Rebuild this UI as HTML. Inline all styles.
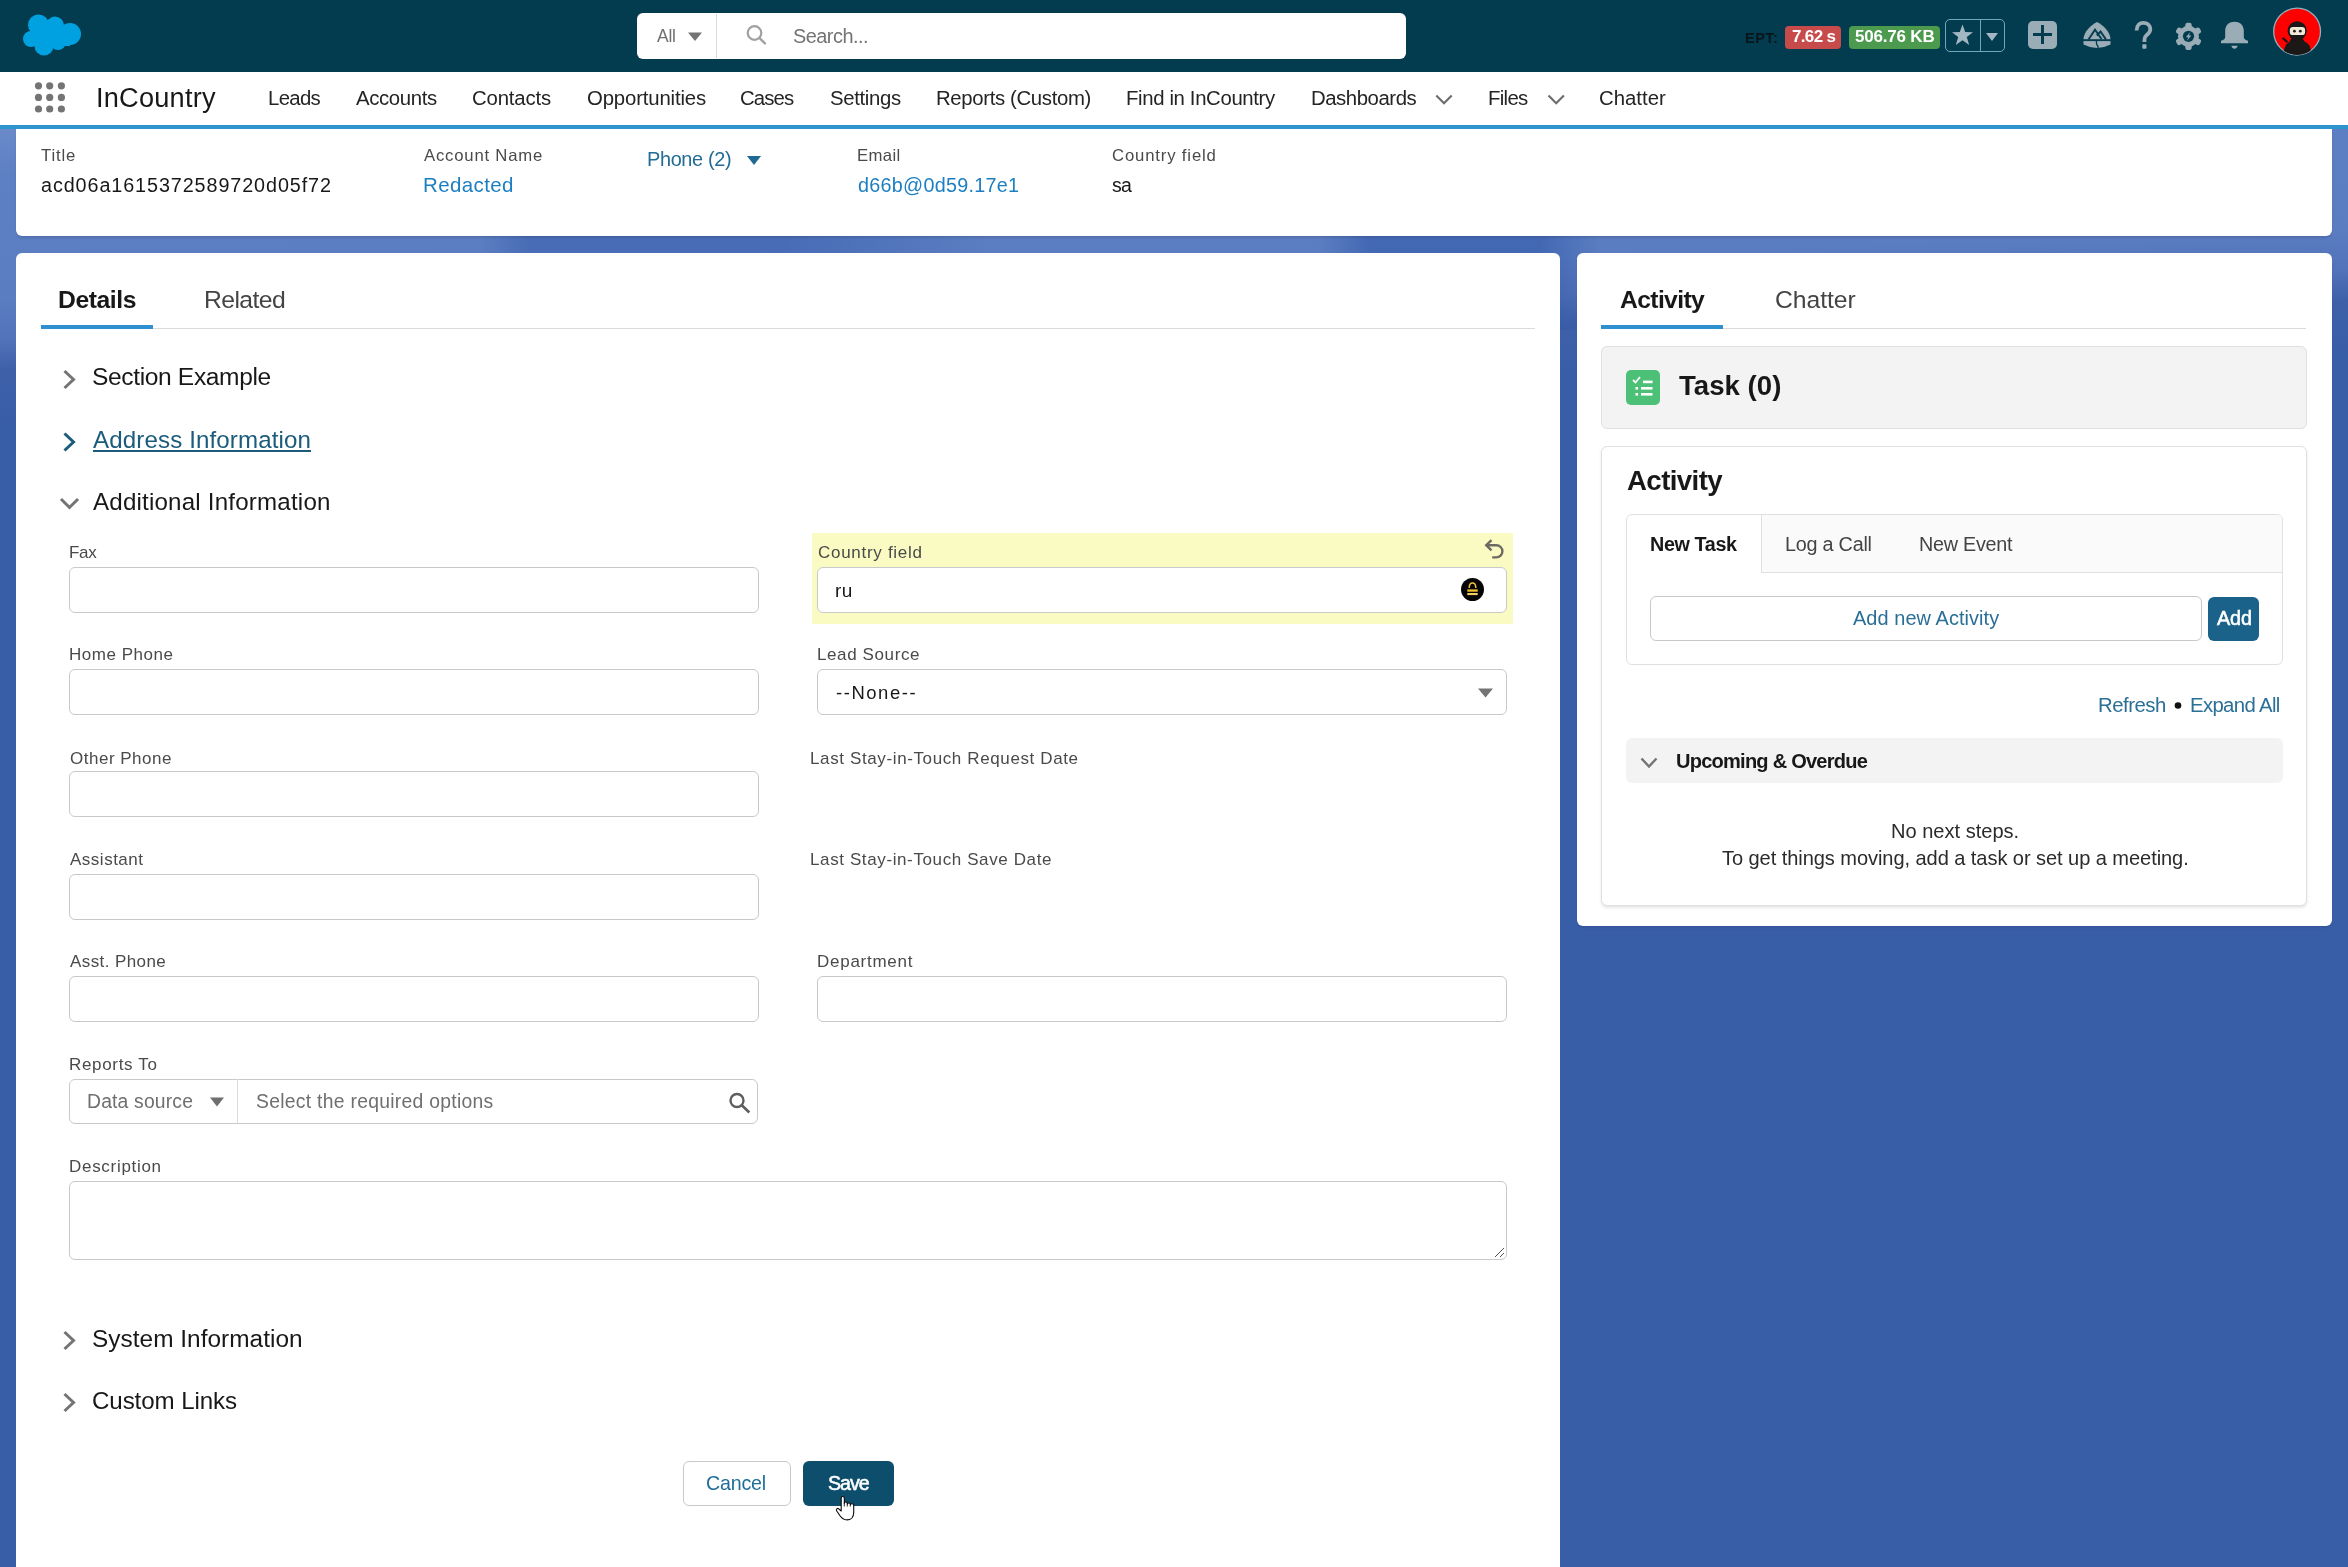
<!DOCTYPE html>
<html><head><meta charset="utf-8">
<style>
html,body{margin:0;padding:0;}
body{width:2348px;height:1567px;overflow:hidden;position:relative;font-family:"Liberation Sans",sans-serif;
 background:
  linear-gradient(178.3deg,#6a8aca 128px,#5d7fc3 175px,#5a7cc1 300px,#5272b9 340px,#3e60a9 370px,#395ea8 420px,#395ea8 1640px);}
.a{position:absolute;box-sizing:border-box;}
.t{position:absolute;white-space:nowrap;will-change:transform;}
.inp{position:absolute;box-sizing:border-box;border:1px solid #c9c9c9;border-radius:6px;background:#fff;}
svg{position:absolute;overflow:visible;}
</style></head><body>
<div class="a" style="left:0;top:200px;width:2348px;height:130px;background:linear-gradient(90deg,rgba(45,85,165,0) 0px,rgba(45,85,165,0) 480px,rgba(45,85,165,0.42) 530px,rgba(45,85,165,0.42) 780px,rgba(45,85,165,0) 990px,rgba(45,85,165,0) 1320px,rgba(45,85,165,0.5) 1370px,rgba(45,85,165,0.5) 1540px,rgba(45,85,165,0) 1600px,rgba(45,85,165,0) 2348px);"></div>
<!-- header -->
<div class="a" style="left:0;top:0;width:2348px;height:72px;background:#033c4f;"></div>
<svg style="left:0;top:0" width="100" height="72">
 <g fill="#00a1e0">
  <circle cx="38.5" cy="25" r="10.5"/>
  <circle cx="55" cy="25.5" r="9"/>
  <circle cx="70" cy="34" r="11"/>
  <circle cx="31" cy="39" r="8"/>
  <circle cx="44" cy="46" r="9.5"/>
  <circle cx="58" cy="42" r="8"/>
  <rect x="30" y="26" width="40" height="20"/>
 </g>
</svg>
<div class="a" style="left:637px;top:13px;width:769px;height:46px;background:#fff;border-radius:6px;"></div>
<div class="a" style="left:716px;top:14px;width:1px;height:44px;background:#dcdcdc;"></div>
<svg style="left:0;top:0" width="2348" height="72">
 <path d="M688 32.5 L702 32.5 L695 41 Z" fill="#747474"/>
 <circle cx="754.5" cy="33" r="6.8" fill="none" stroke="#a0a0a0" stroke-width="2.2"/>
 <path d="M759.5 38 L765 43.5" stroke="#a0a0a0" stroke-width="2.4" stroke-linecap="round"/>
</svg>
<!-- badges -->
<div class="a" style="left:1785px;top:26px;width:56px;height:23px;background:#c84b4c;border-radius:4px;"></div>
<div class="a" style="left:1849px;top:26px;width:91px;height:23px;background:#4c9a4d;border-radius:4px;"></div>
<div class="a" style="left:1945px;top:19px;width:60px;height:33px;border:1.5px solid #6fa7bd;border-radius:5px;"></div>
<div class="a" style="left:1979.5px;top:20px;width:1.5px;height:31px;background:#6fa7bd;"></div>
<svg style="left:0;top:0" width="2348" height="72">
 <path d="M1962.5 24.5 L1965.2 32 L1973 32.2 L1966.8 37 L1969.2 45 L1962.5 40.2 L1955.8 45 L1958.2 37 L1952 32.2 L1959.8 32 Z" fill="#a3b7c3"/>
 <path d="M1986 33 L1998 33 L1992 41 Z" fill="#a3b7c3"/>
 <rect x="2028" y="21" width="29" height="28" rx="5" fill="#9aacb6"/>
 <path d="M2042.5 25 V44 M2033 34.5 H2052" stroke="#033c4f" stroke-width="3"/>
 <!-- trailhead -->
 <path d="M2097 22 C2103 25 2110.3 32 2110.5 39 L2110.5 44.5 Q2097 51.5 2083.5 44.5 L2083.5 39 C2083.7 32 2091 25 2097 22 Z" fill="#9aacb6"/>
 <rect x="2083" y="39.2" width="28" height="1.9" fill="#033c4f"/>
 <path d="M2088.5 39.5 L2095 29.8 L2101.5 39 M2096.8 35.5 L2100.6 31.6 L2106 39.5" stroke="#033c4f" stroke-width="1.9" fill="none" stroke-linejoin="miter"/>
 <path d="M2096.4 41 L2096.6 44.3 L2098 46.3 L2098 50" stroke="#033c4f" stroke-width="1.3" fill="none"/>
 <!-- question -->
 <path d="M2136.6 30.5 C2136.6 25 2140 22.8 2143.3 22.8 C2147.5 22.8 2150.3 25.5 2150.3 29.3 C2150.3 33 2147.3 34.3 2145.6 36.2 C2144.6 37.3 2144.4 38.5 2144.4 42" stroke="#9aacb6" stroke-width="3.8" fill="none"/>
 <rect x="2142.3" y="44.2" width="4.2" height="4.6" rx="0.8" fill="#9aacb6"/>
 <!-- gear -->
 <g transform="translate(2188.5,36.3)">
  <g fill="#9aacb6">
   <circle r="10.5"/>
   <rect x="-3.2" y="-13.6" width="6.4" height="27.2" rx="2.2"/>
   <rect x="-3.2" y="-13.6" width="6.4" height="27.2" rx="2.2" transform="rotate(60)"/>
   <rect x="-3.2" y="-13.6" width="6.4" height="27.2" rx="2.2" transform="rotate(120)"/>
  </g>
  <circle r="5.6" fill="#033c4f"/>
  <path d="M1.8 -4.4 L-2.6 0.9 L-0.2 0.9 L-1.6 4.6 L2.8 -0.9 L0.4 -0.9 Z" fill="#9aacb6"/>
 </g>
 <!-- bell -->
 <path d="M2234.5 21.8 C2240.8 21.8 2243.8 26 2243.8 31 L2243.8 37.3 C2243.8 39 2246 40.3 2248 40.8 L2248 43.2 L2221 43.2 L2221 40.8 C2223 40.3 2225.2 39 2225.2 37.3 L2225.2 31 C2225.2 26 2228.2 21.8 2234.5 21.8 Z" fill="#9aacb6"/>
 <path d="M2231.3 45.8 H2237.7 C2237.2 47.8 2236 48.8 2234.5 48.8 C2233 48.8 2231.8 47.8 2231.3 45.8 Z" fill="#9aacb6"/>
 <!-- avatar -->
 <defs><clipPath id="avc"><circle cx="2297.1" cy="31.6" r="23.2"/></clipPath></defs>
 <circle cx="2297.1" cy="31.6" r="23.4" fill="#ff0000" stroke="#8fb0bc" stroke-width="1.3"/>
 <g clip-path="url(#avc)" fill="#1c1818">
  <path d="M2291.5 38 L2302.5 38 L2313 58 L2281 58 Z"/>
  <path d="M2285 47 C2287 42 2292 40 2297 40 C2302 40 2308 42 2310 47 L2313 58 L2281 58 Z"/>
 </g>
 <circle cx="2297.2" cy="30.8" r="9.6" fill="#1c1818"/>
 <rect x="2289.8" y="26.9" width="15.3" height="8.2" rx="3.2" fill="#f1ead8"/>
 <circle cx="2294.4" cy="31.2" r="1.4" fill="#2a2020"/>
 <circle cx="2300.3" cy="31.2" r="1.4" fill="#2a2020"/>
 <path d="M2282.6 37.9 L2287.5 42.3" stroke="#1c1818" stroke-width="2.2"/>
</svg>

<!-- nav -->
<div class="a" style="left:0;top:72px;width:2348px;height:53px;background:#fff;"></div>
<div class="a" style="left:0;top:125px;width:2348px;height:4px;background:#2f95d1;"></div>
<svg style="left:0;top:72px" width="2348" height="56">
 <g fill="#747474">
  <circle cx="38.5" cy="13.8" r="3.6"/><circle cx="49.7" cy="13.8" r="3.6"/><circle cx="61.4" cy="13.8" r="3.6"/>
  <circle cx="38.5" cy="25.4" r="3.6"/><circle cx="49.7" cy="25.4" r="3.6"/><circle cx="61.4" cy="25.4" r="3.6"/>
  <circle cx="38.5" cy="37" r="3.6"/><circle cx="49.7" cy="37" r="3.6"/><circle cx="61.4" cy="37" r="3.6"/>
 </g>
 <path d="M1436.3 23.5 L1444 31.2 L1451.7 23.5" stroke="#6e6e6e" stroke-width="2.2" fill="none"/>
 <path d="M1548.5 23.5 L1556.2 31.2 L1563.9 23.5" stroke="#6e6e6e" stroke-width="2.2" fill="none"/>
</svg>

<!-- top highlights card -->
<div class="a" style="left:16px;top:129px;width:2316px;height:107px;background:#fff;border-radius:0 0 6px 6px;box-shadow:0 2px 2px rgba(0,0,0,0.10);"></div>
<svg style="left:0;top:0" width="800" height="240">
 <path d="M747 156 L761 156 L754 165 Z" fill="#1f6a93"/>
</svg>

<!-- left card -->
<div class="a" style="left:16px;top:253px;width:1544px;height:1340px;background:#fff;border-radius:6px;"></div>
<div class="a" style="left:41px;top:327.5px;width:1494px;height:1.5px;background:#dddbda;"></div>
<div class="a" style="left:41px;top:325px;width:112px;height:4px;background:#2e90cf;"></div>
<svg style="left:0;top:0" width="1600" height="1567">
 <path d="M64.5 371 L73.5 379.5 L64.5 388" stroke="#747474" stroke-width="3" fill="none"/>
 <path d="M64.5 433.5 L73.5 442 L64.5 450.5" stroke="#1b5b7b" stroke-width="3" fill="none"/>
 <path d="M61 499 L69.5 507.5 L78 499" stroke="#747474" stroke-width="3" fill="none"/>
 <path d="M64.5 1332 L73.5 1340.5 L64.5 1349" stroke="#747474" stroke-width="3" fill="none"/>
 <path d="M64.5 1394 L73.5 1402.5 L64.5 1411" stroke="#747474" stroke-width="3" fill="none"/>
</svg>
<div class="a" style="left:93px;top:449.5px;width:217.5px;height:2.2px;background:#1b5b7b;"></div>

<!-- inputs left col -->
<div class="inp" style="left:69px;top:567px;width:690px;height:46px;"></div>
<div class="inp" style="left:69px;top:669px;width:690px;height:46px;"></div>
<div class="inp" style="left:69px;top:771px;width:690px;height:46px;"></div>
<div class="inp" style="left:69px;top:874px;width:690px;height:46px;"></div>
<div class="inp" style="left:69px;top:976px;width:690px;height:46px;"></div>
<!-- right col -->
<div class="a" style="left:811.5px;top:533px;width:701.5px;height:90.5px;background:#f9fbc2;"></div>
<div class="inp" style="left:817px;top:567px;width:690px;height:46px;"></div>
<div class="inp" style="left:817px;top:669px;width:690px;height:46px;"></div>
<div class="inp" style="left:817px;top:976px;width:690px;height:46px;"></div>
<svg style="left:0;top:0" width="1600" height="1567">
 <circle cx="1472.5" cy="589.5" r="11.5" fill="#050505"/>
 <path d="M1469.2 588 C1469.2 581.2 1475.8 581.2 1475.8 588" stroke="#f2c230" stroke-width="1.5" fill="none"/>
 <rect x="1467.3" y="589.4" width="10.4" height="2.3" fill="#f2c230"/>
 <rect x="1467.3" y="593" width="10.4" height="2.1" fill="#f0d060"/>
 <path d="M1491.5 540.2 L1486.2 545.2 L1491.5 550.4" stroke="#6b6b63" stroke-width="2.4" fill="none"/>
 <path d="M1487 545.2 H1496.3 A6.1 6.1 0 0 1 1496.3 557.4 H1492.2" stroke="#6b6b63" stroke-width="2.4" fill="none"/>
 <path d="M1478 688.5 L1493 688.5 L1485.5 697.5 Z" fill="#747474"/>
</svg>
<!-- reports to -->
<div class="inp" style="left:69px;top:1078.5px;width:689px;height:45px;"></div>
<div class="a" style="left:237px;top:1079px;width:1px;height:44px;background:#dcdcdc;"></div>
<svg style="left:0;top:0" width="1600" height="1567">
 <path d="M210 1097.5 L224 1097.5 L217 1106.5 Z" fill="#6f6f6f"/>
 <circle cx="737" cy="1100.5" r="6.5" fill="none" stroke="#5e5e5e" stroke-width="2.4"/>
 <path d="M741.8 1105.3 L749.3 1112.5" stroke="#5e5e5e" stroke-width="2.6"/>
</svg>
<!-- description -->
<div class="inp" style="left:69px;top:1181px;width:1438px;height:79px;"></div>
<svg style="left:0;top:0" width="1600" height="1567">
 <path d="M1495 1257 L1504 1248" stroke="#555" stroke-width="1"/>
 <path d="M1500 1257 L1504 1253" stroke="#555" stroke-width="1"/>
</svg>
<!-- buttons -->
<div class="a" style="left:682.5px;top:1461px;width:108px;height:45px;border:1px solid #c9c9c9;border-radius:6px;background:#fff;"></div>
<div class="a" style="left:803px;top:1461px;width:91px;height:45px;border-radius:6px;background:#0c4e6b;"></div>

<!-- right card -->
<div class="a" style="left:1577px;top:253px;width:755px;height:672.5px;background:#fff;border-radius:6px;box-shadow:0 2px 2px rgba(0,0,0,0.08);"></div>
<div class="a" style="left:1601px;top:327.5px;width:1705px;height:1.5px;background:#dddbda;width:705px;"></div>
<div class="a" style="left:1601px;top:325px;width:122px;height:4px;background:#2e90cf;"></div>
<div class="a" style="left:1601px;top:346px;width:706px;height:83px;background:#f3f3f3;border:1px solid #e0e0e0;border-radius:6px;"></div>
<div class="a" style="left:1626px;top:370px;width:34px;height:34.5px;background:#4bc076;border-radius:5px;"></div>
<svg style="left:1626px;top:370px" width="34" height="35">
 <path d="M7 10 L9.5 12.5 L14 7" stroke="#fff" stroke-width="1.8" fill="none"/>
 <rect x="17" y="10.6" width="9.6" height="2.6" fill="#fff"/>
 <rect x="9.5" y="17" width="2.6" height="2.6" fill="#fff"/>
 <rect x="15" y="17" width="11.5" height="2.6" fill="#fff"/>
 <rect x="9.5" y="23" width="2.6" height="2.6" fill="#fff"/>
 <rect x="15" y="23" width="11.5" height="2.6" fill="#fff"/>
</svg>
<div class="a" style="left:1601px;top:446px;width:706px;height:460px;background:#fff;border:1px solid #e0e0e0;border-radius:6px;box-shadow:0 2px 3px rgba(0,0,0,0.10);"></div>
<div class="a" style="left:1626px;top:514px;width:656.5px;height:151px;background:#fff;border:1px solid #e0e0e0;border-radius:6px;"></div>
<div class="a" style="left:1761px;top:515px;width:520.5px;height:57.5px;background:#fafafa;border-left:1px solid #e0e0e0;border-bottom:1px solid #e0e0e0;border-radius:0 5px 0 0;"></div>
<div class="inp" style="left:1650px;top:596px;width:551.5px;height:45px;"></div>
<div class="a" style="left:2208px;top:596.5px;width:51px;height:44px;background:#1a6289;border-radius:6px;"></div>
<div class="a" style="left:1626px;top:738px;width:656.5px;height:45px;background:#f3f3f3;border-radius:6px;"></div>
<svg style="left:0;top:0" width="2348" height="1567">
 <path d="M1641.5 758.5 L1649 766.5 L1656.5 758.5" stroke="#747474" stroke-width="2.4" fill="none"/>
 <circle cx="2178" cy="705.5" r="3.3" fill="#111"/>
</svg>
<!-- cursor -->
<svg style="left:0;top:0" width="1600" height="1567">
 <path d="M841.2 1511 V1498.2 C841.2 1496 844.3 1496 844.3 1498.2 V1503.2 C844.3 1501.6 847.3 1501.6 847.3 1503.2 V1504 C847.3 1502.6 850.3 1502.6 850.3 1504 V1504.8 C850.3 1503.4 853.7 1503.4 853.7 1505.2 V1512.5 C853.7 1517 851 1519.9 847 1519.9 C843.5 1519.9 841.5 1518 839.8 1515.5 L836.6 1510.8 C835.8 1509.3 837.5 1507.8 838.7 1508.8 Z" fill="#fff" stroke="#0a0a0a" stroke-width="1.1" stroke-linejoin="round"/>
 <path d="M844.3 1503 V1506.5 M847.3 1503.8 V1506.5 M850.3 1504.6 V1506.5" stroke="#0a0a0a" stroke-width="0.9"/>
</svg>
<div class="t" style="left:657.00px;top:28.00px;font-size:17.44px;line-height:17.44px;letter-spacing:-0.252px;color:#6f6f6f;font-weight:400;">All</div>
<div class="t" style="left:793.00px;top:27.00px;font-size:19.91px;line-height:19.91px;letter-spacing:-0.517px;color:#747474;font-weight:400;">Search...</div>
<div class="t" style="left:1745.00px;top:31.00px;font-size:14.54px;line-height:14.54px;letter-spacing:0.450px;color:#08161c;font-weight:700;">EPT:</div>
<div class="t" style="left:1792.00px;top:28.00px;font-size:17.01px;line-height:17.01px;letter-spacing:-0.662px;color:#ffffff;font-weight:700;">7.62 s</div>
<div class="t" style="left:1854.60px;top:28.00px;font-size:17.01px;line-height:17.01px;letter-spacing:-0.200px;color:#ffffff;font-weight:700;">506.76 KB</div>
<div class="t" style="left:95.50px;top:84.00px;font-size:27.18px;line-height:27.18px;letter-spacing:0.223px;color:#181818;font-weight:400;">InCountry</div>
<div class="t" style="left:267.80px;top:88.00px;font-size:20.35px;line-height:20.35px;letter-spacing:-0.664px;color:#242424;font-weight:400;">Leads</div>
<div class="t" style="left:356.00px;top:88.00px;font-size:20.35px;line-height:20.35px;letter-spacing:-0.358px;color:#242424;font-weight:400;">Accounts</div>
<div class="t" style="left:472.00px;top:88.00px;font-size:20.35px;line-height:20.35px;letter-spacing:-0.159px;color:#242424;font-weight:400;">Contacts</div>
<div class="t" style="left:586.60px;top:88.00px;font-size:20.35px;line-height:20.35px;letter-spacing:-0.152px;color:#242424;font-weight:400;">Opportunities</div>
<div class="t" style="left:740.00px;top:88.00px;font-size:20.35px;line-height:20.35px;letter-spacing:-0.873px;color:#242424;font-weight:400;">Cases</div>
<div class="t" style="left:830.00px;top:88.00px;font-size:20.35px;line-height:20.35px;letter-spacing:-0.334px;color:#242424;font-weight:400;">Settings</div>
<div class="t" style="left:936.00px;top:88.00px;font-size:20.35px;line-height:20.35px;letter-spacing:-0.350px;color:#242424;font-weight:400;">Reports (Custom)</div>
<div class="t" style="left:1126.00px;top:88.00px;font-size:20.35px;line-height:20.35px;letter-spacing:-0.359px;color:#242424;font-weight:400;">Find in InCountry</div>
<div class="t" style="left:1310.50px;top:88.00px;font-size:20.35px;line-height:20.35px;letter-spacing:-0.447px;color:#242424;font-weight:400;">Dashboards</div>
<div class="t" style="left:1487.70px;top:88.00px;font-size:20.35px;line-height:20.35px;letter-spacing:-0.695px;color:#242424;font-weight:400;">Files</div>
<div class="t" style="left:1599.00px;top:88.00px;font-size:20.35px;line-height:20.35px;letter-spacing:0.010px;color:#242424;font-weight:400;">Chatter</div>
<div class="t" style="left:41.40px;top:148.00px;font-size:16.72px;line-height:16.72px;letter-spacing:0.839px;color:#4a4a4a;font-weight:400;">Title</div>
<div class="t" style="left:41.40px;top:176.00px;font-size:19.77px;line-height:19.77px;letter-spacing:0.908px;color:#181818;font-weight:400;">acd06a1615372589720d05f72</div>
<div class="t" style="left:424.00px;top:148.00px;font-size:16.72px;line-height:16.72px;letter-spacing:0.795px;color:#4a4a4a;font-weight:400;">Account Name</div>
<div class="t" style="left:423.00px;top:175.00px;font-size:20.49px;line-height:20.49px;letter-spacing:0.386px;color:#1b7fc2;font-weight:400;">Redacted</div>
<div class="t" style="left:647.00px;top:150.00px;font-size:19.91px;line-height:19.91px;letter-spacing:-0.349px;color:#236c95;font-weight:400;">Phone (2)</div>
<div class="t" style="left:857.40px;top:148.00px;font-size:16.72px;line-height:16.72px;letter-spacing:0.386px;color:#4a4a4a;font-weight:400;">Email</div>
<div class="t" style="left:858.40px;top:176.00px;font-size:19.77px;line-height:19.77px;letter-spacing:0.271px;color:#1b7fc2;font-weight:400;">d66b@0d59.17e1</div>
<div class="t" style="left:1112.00px;top:148.00px;font-size:16.72px;line-height:16.72px;letter-spacing:0.843px;color:#4a4a4a;font-weight:400;">Country field</div>
<div class="t" style="left:1112.00px;top:176.00px;font-size:19.5px;line-height:19.5px;letter-spacing:-0.750px;color:#181818;font-weight:400;">sa</div>
<div class="t" style="left:57.70px;top:288.00px;font-size:24.71px;line-height:24.71px;letter-spacing:-0.428px;color:#181818;font-weight:700;">Details</div>
<div class="t" style="left:203.70px;top:288.00px;font-size:24.71px;line-height:24.71px;letter-spacing:-0.568px;color:#444444;font-weight:400;">Related</div>
<div class="t" style="left:1620.00px;top:288.00px;font-size:24.71px;line-height:24.71px;letter-spacing:-0.642px;color:#181818;font-weight:700;">Activity</div>
<div class="t" style="left:1774.50px;top:288.00px;font-size:24.71px;line-height:24.71px;letter-spacing:-0.047px;color:#444444;font-weight:400;">Chatter</div>
<div class="t" style="left:92.40px;top:365.00px;font-size:24.56px;line-height:24.56px;letter-spacing:-0.353px;color:#181818;font-weight:400;">Section Example</div>
<div class="t" style="left:93.40px;top:428.00px;font-size:24.13px;line-height:24.13px;letter-spacing:0.118px;color:#1b5b7b;font-weight:400;">Address Information</div>
<div class="t" style="left:93.40px;top:490.00px;font-size:24.13px;line-height:24.13px;letter-spacing:0.194px;color:#181818;font-weight:400;">Additional Information</div>
<div class="t" style="left:92.40px;top:1327.00px;font-size:24.42px;line-height:24.42px;letter-spacing:0.020px;color:#181818;font-weight:400;">System Information</div>
<div class="t" style="left:92.40px;top:1389.00px;font-size:24.13px;line-height:24.13px;letter-spacing:-0.098px;color:#181818;font-weight:400;">Custom Links</div>
<div class="t" style="left:69.00px;top:544.00px;font-size:17.01px;line-height:17.01px;letter-spacing:-0.269px;color:#4a4a4a;font-weight:400;">Fax</div>
<div class="t" style="left:69.00px;top:646.00px;font-size:17.01px;line-height:17.01px;letter-spacing:0.525px;color:#4a4a4a;font-weight:400;">Home Phone</div>
<div class="t" style="left:70.00px;top:750.00px;font-size:17.01px;line-height:17.01px;letter-spacing:0.506px;color:#4a4a4a;font-weight:400;">Other Phone</div>
<div class="t" style="left:70.00px;top:851.00px;font-size:17.01px;line-height:17.01px;letter-spacing:0.506px;color:#4a4a4a;font-weight:400;">Assistant</div>
<div class="t" style="left:70.00px;top:953.00px;font-size:17.01px;line-height:17.01px;letter-spacing:0.409px;color:#4a4a4a;font-weight:400;">Asst. Phone</div>
<div class="t" style="left:69.00px;top:1056.00px;font-size:17.01px;line-height:17.01px;letter-spacing:0.673px;color:#4a4a4a;font-weight:400;">Reports To</div>
<div class="t" style="left:69.00px;top:1158.00px;font-size:17.01px;line-height:17.01px;letter-spacing:0.702px;color:#4a4a4a;font-weight:400;">Description</div>
<div class="t" style="left:817.60px;top:544.00px;font-size:17.01px;line-height:17.01px;letter-spacing:0.710px;color:#4a4a4a;font-weight:400;">Country field</div>
<div class="t" style="left:816.60px;top:646.00px;font-size:17.01px;line-height:17.01px;letter-spacing:0.605px;color:#4a4a4a;font-weight:400;">Lead Source</div>
<div class="t" style="left:810.40px;top:750.00px;font-size:17.01px;line-height:17.01px;letter-spacing:0.620px;color:#4a4a4a;font-weight:400;">Last Stay-in-Touch Request Date</div>
<div class="t" style="left:810.40px;top:851.00px;font-size:17.01px;line-height:17.01px;letter-spacing:0.613px;color:#4a4a4a;font-weight:400;">Last Stay-in-Touch Save Date</div>
<div class="t" style="left:816.80px;top:953.00px;font-size:17.01px;line-height:17.01px;letter-spacing:0.734px;color:#4a4a4a;font-weight:400;">Department</div>
<div class="t" style="left:835.40px;top:581.00px;font-size:19px;line-height:19px;letter-spacing:0.473px;color:#181818;font-weight:400;">ru</div>
<div class="t" style="left:836.40px;top:684.00px;font-size:18.46px;line-height:18.46px;letter-spacing:1.558px;color:#181818;font-weight:400;">--None--</div>
<div class="t" style="left:86.50px;top:1092.00px;font-size:19.33px;line-height:19.33px;letter-spacing:0.174px;color:#6f6f6f;font-weight:400;">Data source</div>
<div class="t" style="left:256.00px;top:1092.00px;font-size:19.33px;line-height:19.33px;letter-spacing:0.282px;color:#6f6f6f;font-weight:400;">Select the required options</div>
<div class="t" style="left:706.30px;top:1474.00px;font-size:19.62px;line-height:19.62px;letter-spacing:-0.197px;color:#1f6e98;font-weight:400;">Cancel</div>
<div class="t" style="left:827.70px;top:1474.00px;font-size:19.62px;line-height:19.62px;letter-spacing:-0.997px;color:#ffffff;font-weight:400;-webkit-text-stroke:0.55px #fff;">Save</div>
<div class="t" style="left:1678.50px;top:372.00px;font-size:27.62px;line-height:27.62px;letter-spacing:0.014px;color:#181818;font-weight:700;">Task (0)</div>
<div class="t" style="left:1627.00px;top:467.00px;font-size:27.62px;line-height:27.62px;letter-spacing:-0.583px;color:#181818;font-weight:700;">Activity</div>
<div class="t" style="left:1649.50px;top:535.00px;font-size:19.77px;line-height:19.77px;letter-spacing:-0.389px;color:#181818;font-weight:700;">New Task</div>
<div class="t" style="left:1785.00px;top:535.00px;font-size:19.77px;line-height:19.77px;letter-spacing:-0.224px;color:#444444;font-weight:400;">Log a Call</div>
<div class="t" style="left:1919.30px;top:535.00px;font-size:19.77px;line-height:19.77px;letter-spacing:-0.248px;color:#444444;font-weight:400;">New Event</div>
<div class="t" style="left:1852.70px;top:609.00px;font-size:19.91px;line-height:19.91px;letter-spacing:0.081px;color:#2a6f96;font-weight:400;">Add new Activity</div>
<div class="t" style="left:2216.70px;top:609.00px;font-size:19.77px;line-height:19.77px;letter-spacing:-0.088px;color:#ffffff;font-weight:400;-webkit-text-stroke:0.55px #fff;">Add</div>
<div class="t" style="left:2098.40px;top:695.00px;font-size:20.35px;line-height:20.35px;letter-spacing:-0.503px;color:#2a6f96;font-weight:400;">Refresh</div>
<div class="t" style="left:2189.80px;top:695.00px;font-size:20.35px;line-height:20.35px;letter-spacing:-0.649px;color:#2a6f96;font-weight:400;">Expand All</div>
<div class="t" style="left:1675.70px;top:751.00px;font-size:20.06px;line-height:20.06px;letter-spacing:-0.771px;color:#181818;font-weight:700;">Upcoming &amp; Overdue</div>
<div class="t" style="left:1890.70px;top:821.00px;font-size:20.06px;line-height:20.06px;letter-spacing:0.002px;color:#2b2b2b;font-weight:400;">No next steps.</div>
<div class="t" style="left:1722.40px;top:848.00px;font-size:20.06px;line-height:20.06px;letter-spacing:-0.067px;color:#2b2b2b;font-weight:400;">To get things moving, add a task or set up a meeting.</div>
</body></html>
